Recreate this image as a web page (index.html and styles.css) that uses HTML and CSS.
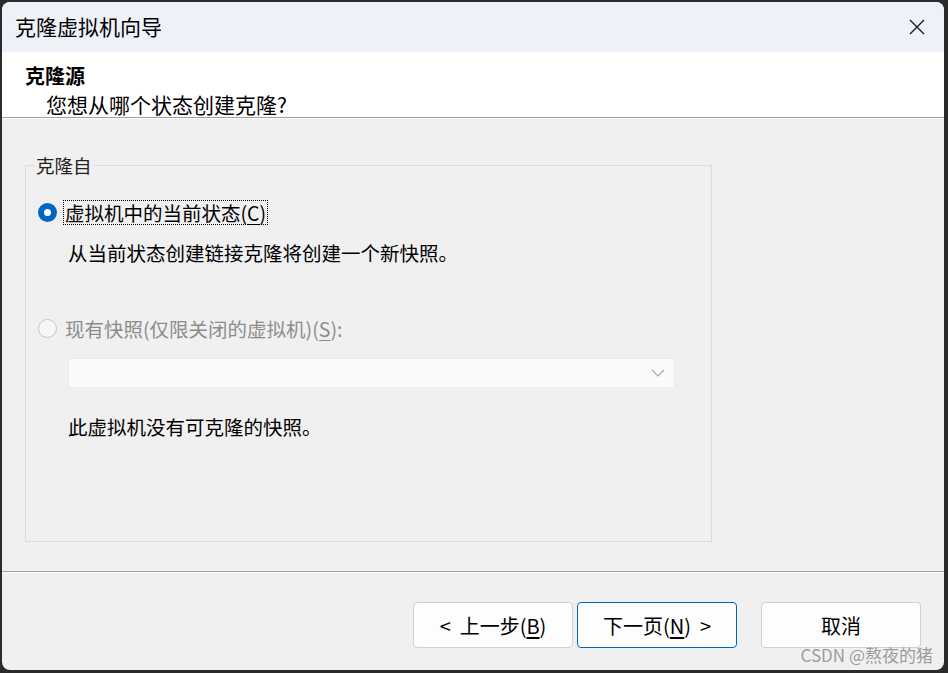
FILE: index.html
```html
<!DOCTYPE html>
<html lang="zh-CN">
<head>
    <meta charset="UTF-8">
    <title>克隆虚拟机向导</title>
    <link rel="stylesheet" href="styles.css">
</head>
<body>
    <div class="window">
        <div class="titlebar">
            <span class="title">克隆虚拟机向导</span>
            <svg class="close" width="18" height="18" viewBox="0 0 18 18">
                <path d="M2 2 L16 16 M16 2 L2 16" stroke="#1a1a1a" stroke-width="1.4" fill="none"/>
            </svg>
        </div>

        <div class="header">
            <div class="header-title">克隆源</div>
            <div class="header-sub">您想从哪个状态创建克隆?</div>
        </div>

        <div class="content">
            <fieldset class="group">
                <legend>克隆自</legend>

                <div class="option">
                    <span class="radio checked"></span>
                    <span class="label focused">虚拟机中的当前状态(<u>C</u>)</span>
                </div>
                <p class="desc first">从当前状态创建链接克隆将创建一个新快照。</p>

                <div class="option disabled">
                    <span class="radio"></span>
                    <span class="label">现有快照(仅限关闭的虚拟机)(<u>S</u>):</span>
                </div>
                <div class="select">
                    <svg width="14" height="8" viewBox="0 0 14 8">
                        <path d="M1 1 L7 7 L13 1" stroke="#a8a8a8" stroke-width="1.2" fill="none"/>
                    </svg>
                </div>
                <p class="desc">此虚拟机没有可克隆的快照。</p>
            </fieldset>
        </div>

        <div class="footer">
            <button class="btn">&lt;&nbsp; 上一步(<u>B</u>)</button>
            <button class="btn primary">下一页(<u>N</u>)&nbsp; &gt;</button>
            <button class="btn cancel">取消</button>
        </div>
    </div>

    <div class="watermark">CSDN @熬夜的猪</div>
</body>
</html>
```

FILE: styles.css
```css
body {
    margin: 0;
    width: 948px;
    height: 673px;
    background-color: #2b2b2b;
    font-family: "Noto Sans CJK SC", "Noto Sans", sans-serif;
    color: #000;
    overflow: hidden;
    position: relative;
}

.window {
    margin: 2px 4px 0 2px;
    height: 668px;
    background-color: #f0f0f0;
    border-radius: 8px;
    overflow: hidden;
    display: flex;
    flex-direction: column;
}

.titlebar {
    height: 50px;
    flex: none;
    background-color: #eef2f8;
    display: flex;
    align-items: center;
    justify-content: space-between;
    padding: 0 18px 0 13px;
}

.title {
    font-size: 21px;
    line-height: 1;
    margin-top: -2px;
}

.header {
    height: 66px;
    flex: none;
    background-color: #fff;
    border-bottom: 1px solid #a0a0a0;
    box-shadow: 0 1px 0 #fff;
    padding-left: 23px;
    box-sizing: border-box;
    padding-top: 10px;
}

.header-title {
    font-size: 20px;
    font-weight: bold;
    line-height: 28px;
}

.header-sub {
    font-size: 21px;
    line-height: 28px;
    padding-left: 21px;
}

.content {
    flex: 1;
    padding: 35px 0 0 23px;
    border-bottom: 1px solid #a0a0a0;
    box-shadow: 0 1px 0 #fff;
}

.group {
    width: 687px;
    height: 389px;
    box-sizing: border-box;
    margin: 0;
    padding: 23px 0 0 0;
    border: 1px solid #dcdcdc;
    min-width: 0;
}

.group legend {
    font-size: 18.5px;
    line-height: 24px;
    color: #222;
    margin-left: 8px;
    padding: 0 2px;
}

.option {
    display: flex;
    align-items: center;
    gap: 6px;
    padding-left: 12px;
    height: 25px;
}

.radio {
    width: 19px;
    height: 19px;
    box-sizing: border-box;
    border-radius: 50%;
    border: 1px solid #c6c6c6;
    background-color: #f6f6f6;
    flex: none;
}

.radio.checked {
    border: 6px solid #0067c0;
    background-color: #fff;
}

.label {
    font-size: 19.5px;
    line-height: 23px;
    padding: 0 1px;
    border: 1px dotted transparent;
}

.label.focused {
    border-color: #000;
}

.label u {
    text-underline-offset: 3px;
}

.disabled .label {
    color: #8c8c8c;
}

.desc {
    font-size: 19.5px;
    line-height: 26px;
    margin: 0;
    padding-left: 42px;
}

.desc.first {
    margin-top: 15px;
    margin-bottom: 50px;
}

.select {
    margin: 17px 0 26px 42px;
    width: 607px;
    height: 30px;
    box-sizing: border-box;
    background-color: #fafafa;
    border: 1px solid #ebebeb;
    display: flex;
    align-items: center;
    justify-content: flex-end;
    padding-right: 9px;
}

.footer {
    height: 98px;
    flex: none;
    display: flex;
    align-items: flex-start;
    padding: 30px 23px 0 0;
    box-sizing: border-box;
    justify-content: flex-end;
    gap: 4px;
}

.btn {
    width: 160px;
    height: 46px;
    font-family: inherit;
    font-size: 20px;
    background-color: #fdfdfd;
    border: 1px solid #d0d0d0;
    border-radius: 4px;
    color: #000;
    padding: 0;
}

.btn u {
    text-underline-offset: 3px;
}

.btn.primary {
    border-color: #0067c0;
}

.btn.cancel {
    margin-left: 20px;
}

.watermark {
    position: absolute;
    right: 15px;
    bottom: 6px;
    font-size: 17px;
    color: rgba(140, 140, 140, 0.85);
}
```
